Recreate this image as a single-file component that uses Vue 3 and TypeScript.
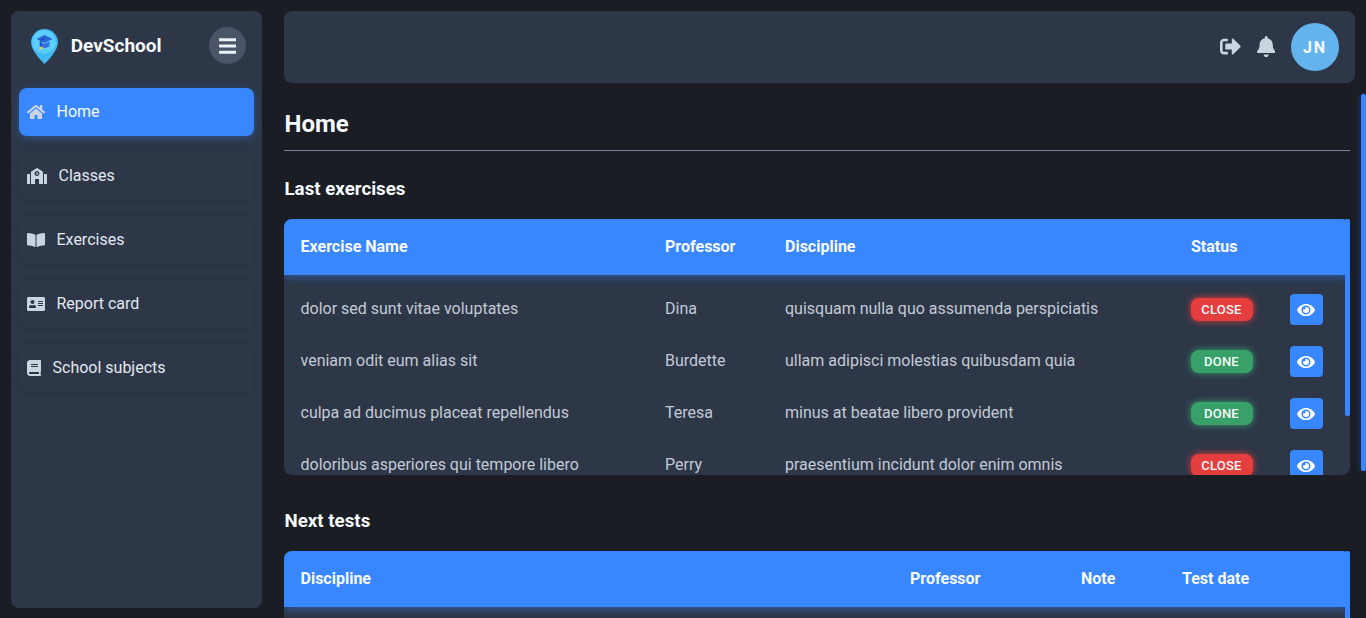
<template>
  <div class="layout">
    <aside class="sidebar">
      <div class="sidebar__head">
        <div class="brand">
          <svg class="brand__logo" viewBox="0 0 27 35" aria-hidden="true">
            <path d="M13.500 0C6 0 0 6 0 13.500c0 7.300 9.300 17.700 13.500 21.500C17.700 31.200 27 20.800 27 13.500 27 6 21 0 13.500 0z" fill="#43b9f4" />
            <circle cx="13" cy="13" r="11.800" fill="#5ccdfd" />
            <path d="M8.500 12.500v4.300c1.300 1.500 3 2.200 5 2.200s3.700-.7 5-2.200v-4.300l-5 2.500z" fill="#2f6ee3" />
            <path d="M13.500 6 5.500 10l8 4 8-4z" fill="#2b62d9" />
            <path d="M13.300 9.300 9.500 10.800v7h.9v-6.500l3.200-1.300z" fill="#163e9c" />
            <rect x="9" y="17.800" width="2.600" height="2.200" fill="#f6c945" />
          </svg>
          <span class="brand__name">DevSchool</span>
        </div>
        <button class="menu-btn" type="button" aria-label="Menu">
          <svg viewBox="0 0 448 512"><path :d="icons.bars" /></svg>
        </button>
      </div>

      <nav class="nav">
        <a
          v-for="item in navItems"
          :key="item.label"
          class="nav__item"
          :class="{ 'nav__item--active': item.active }"
          href="#"
        >
          <svg class="nav__icon" :viewBox="item.box" aria-hidden="true"><path :d="item.icon" /></svg>
          <span class="nav__label">{{ item.label }}</span>
        </a>
      </nav>
    </aside>

    <div class="content">
      <header class="topbar">
        <svg class="topbar__exit" viewBox="0 0 512 512" aria-hidden="true"><path :d="icons.signOut" /></svg>
        <svg class="topbar__bell" viewBox="0 0 448 512" aria-hidden="true"><path :d="icons.bell" /></svg>
        <div class="avatar">JN</div>
      </header>

      <main class="main">
        <h1 class="main__title">Home</h1>

        <section class="block">
          <h2 class="block__title">Last exercises</h2>
          <div class="table-wrap">
            <div class="table">
              <div class="table__head table__row table__row--exercises">
                <span>Exercise Name</span>
                <span>Professor</span>
                <span>Discipline</span>
                <span>Status</span>
                <span></span>
              </div>
              <div class="table__body">
                <div
                  v-for="row in exercises"
                  :key="row.name"
                  class="table__row table__row--exercises"
                >
                  <span>{{ row.name }}</span>
                  <span>{{ row.professor }}</span>
                  <span>{{ row.discipline }}</span>
                  <span><em class="badge" :class="`badge--${row.status}`">{{ row.status }}</em></span>
                  <span>
                    <button class="eye-btn" type="button" aria-label="View">
                      <svg viewBox="0 0 576 512"><path :d="icons.eye" /></svg>
                    </button>
                  </span>
                </div>
              </div>
            </div>
            <div class="table-wrap__thumb"></div>
          </div>
        </section>

        <section class="block">
          <h2 class="block__title">Next tests</h2>
          <div class="table-wrap">
            <div class="table">
              <div class="table__head table__row table__row--tests">
                <span>Discipline</span>
                <span>Professor</span>
                <span>Note</span>
                <span>Test date</span>
              </div>
            </div>
            <div class="table-wrap__thumb"></div>
          </div>
        </section>
      </main>

      <div class="page-thumb"></div>
    </div>
  </div>
</template>

<script setup lang="ts">
interface NavItem {
  label: string
  box: string
  icon: string
  active?: boolean
}

interface Exercise {
  name: string
  professor: string
  discipline: string
  status: 'close' | 'done'
}

const icons = {
  bars: 'M16 132h416c8.837 0 16-7.163 16-16V76c0-8.837-7.163-16-16-16H16C7.163 60 0 67.163 0 76v40c0 8.837 7.163 16 16 16zm0 160h416c8.837 0 16-7.163 16-16v-40c0-8.837-7.163-16-16-16H16c-8.837 0-16 7.163-16 16v40c0 8.837 7.163 16 16 16zm0 160h416c8.837 0 16-7.163 16-16v-40c0-8.837-7.163-16-16-16H16c-8.837 0-16 7.163-16 16v40c0 8.837 7.163 16 16 16z',
  signOut: 'M497 273L329 441c-15 15-41 4.500-41-17v-96H152c-13.300 0-24-10.700-24-24v-96c0-13.300 10.700-24 24-24h136V88c0-21.400 25.900-32 41-17l168 168c9.300 9.400 9.300 24.600 0 34zM192 436v-40c0-6.600-5.400-12-12-12H96c-17.700 0-32-14.300-32-32V160c0-17.700 14.300-32 32-32h84c6.600 0 12-5.400 12-12V76c0-6.600-5.400-12-12-12H96c-53 0-96 43-96 96v192c0 53 43 96 96 96h84c6.600 0 12-5.400 12-12z',
  bell: 'M224 512c35.320 0 63.970-28.650 63.970-64H160.030c0 35.350 28.650 64 63.970 64zm215.390-149.710c-19.320-20.760-55.470-51.990-55.470-154.290 0-77.700-54.480-139.900-127.940-155.160V32c0-17.670-14.320-32-31.980-32s-31.980 14.330-31.980 32v20.840C118.560 68.100 64.080 130.300 64.080 208c0 102.300-36.150 133.530-55.470 154.290-6 6.450-8.660 14.160-8.610 21.710.11 16.400 12.980 32 32.100 32h383.800c19.120 0 32-15.600 32.100-32 .05-7.550-2.610-15.270-8.610-21.710z',
  eye: 'M572.520 241.400C518.290 135.590 410.930 64 288 64S57.680 135.640 3.480 241.410a32.350 32.350 0 0 0 0 29.190C57.710 376.410 165.070 448 288 448s230.320-71.640 284.520-177.410a32.350 32.350 0 0 0 0-29.190zM288 400a144 144 0 1 1 144-144 143.930 143.930 0 0 1-144 144zm0-240a95.310 95.310 0 0 0-25.310 3.790 47.850 47.850 0 0 1-66.900 66.900A95.780 95.780 0 1 0 288 160z',
}

const navItems: NavItem[] = [
  {
    label: 'Home',
    active: true,
    box: '0 0 576 512',
    icon: 'M280.370 148.260L96 300.110V464a16 16 0 0 0 16 16l112.060-.29a16 16 0 0 0 15.920-16V368a16 16 0 0 1 16-16h64a16 16 0 0 1 16 16v95.640a16 16 0 0 0 16 16.050L464 480a16 16 0 0 0 16-16V300L295.670 148.260a12.190 12.190 0 0 0-15.300 0zM571.600 251.470L488 182.560V44.050a12 12 0 0 0-12-12h-56a12 12 0 0 0-12 12v72.610L318.470 43a48 48 0 0 0-61 0L4.340 251.470a12 12 0 0 0-1.600 16.900l25.500 31A12 12 0 0 0 45.150 301l235.220-193.740a12.190 12.190 0 0 1 15.300 0L530.900 301a12 12 0 0 0 16.900-1.600l25.500-31a12 12 0 0 0-1.700-16.930z',
  },
  {
    label: 'Classes',
    box: '0 0 640 512',
    icon: 'M0 224v272c0 8.840 7.160 16 16 16h80V192H32c-17.670 0-32 14.330-32 32zm360-48h-24v-40c0-4.420-3.580-8-8-8h-16c-4.420 0-8 3.580-8 8v64c0 4.420 3.580 8 8 8h48c4.420 0 8-3.580 8-8v-16c0-4.420-3.580-8-8-8zm137.750-63.960l-160-106.670a32 32 0 0 0-35.500 0l-160 106.670A32 32 0 0 0 128 138.660V512h128V368c0-8.840 7.160-16 16-16h96c8.840 0 16 7.160 16 16v144h128V138.670c0-10.700-5.350-20.700-14.250-26.630zM320 256c-44.180 0-80-35.820-80-80s35.820-80 80-80 80 35.820 80 80-35.820 80-80 80zm288-64h-64v320h80c8.840 0 16-7.160 16-16V224c0-17.670-14.330-32-32-32z',
  },
  {
    label: 'Exercises',
    box: '0 0 576 512',
    icon: 'M542.220 32.050c-54.800 3.110-163.720 14.430-230.960 55.590-4.640 2.840-7.270 7.890-7.270 13.170v363.870c0 11.550 12.630 18.850 23.280 13.490 69.180-34.820 169.230-44.320 218.700-46.920 16.890-.89 30.020-14.430 30.020-30.660V62.750c.01-17.710-15.350-31.740-33.770-30.700zM264.730 87.640C197.500 46.480 88.580 35.170 33.780 32.050 15.360 31.010 0 45.040 0 62.750V400.600c0 16.240 13.130 29.780 30.020 30.660 49.490 2.600 149.590 12.110 218.770 46.950 10.620 5.350 23.210-1.940 23.210-13.460V100.630c0-5.290-2.620-10.140-7.270-12.990z',
  },
  {
    label: 'Report card',
    box: '0 0 576 512',
    icon: 'M528 32H48C21.500 32 0 53.500 0 80v352c0 26.500 21.500 48 48 48h480c26.500 0 48-21.500 48-48V80c0-26.500-21.500-48-48-48zm-352 96c35.300 0 64 28.700 64 64s-28.700 64-64 64-64-28.700-64-64 28.700-64 64-64zm112 236.800c0 10.600-10 19.200-22.400 19.200H86.400C74 384 64 375.400 64 364.800v-19.200c0-31.800 30.100-57.600 67.200-57.600h5c12.300 5.100 25.700 8 39.800 8s27.600-2.900 39.800-8h5c37.100 0 67.200 25.800 67.200 57.600v19.200zM512 312c0 4.400-3.600 8-8 8H360c-4.400 0-8-3.600-8-8v-16c0-4.400 3.600-8 8-8h144c4.400 0 8 3.600 8 8v16zm0-64c0 4.400-3.600 8-8 8H360c-4.400 0-8-3.600-8-8v-16c0-4.400 3.600-8 8-8h144c4.400 0 8 3.600 8 8v16zm0-64c0 4.400-3.600 8-8 8H360c-4.400 0-8-3.600-8-8v-16c0-4.400 3.600-8 8-8h144c4.400 0 8 3.600 8 8v16z',
  },
  {
    label: 'School subjects',
    box: '0 0 448 512',
    icon: 'M448 360V24c0-13.300-10.700-24-24-24H96C43 0 0 43 0 96v320c0 53 43 96 96 96h328c13.300 0 24-10.700 24-24v-16c0-7.500-3.500-14.300-8.900-18.700-4.200-15.400-4.200-59.300 0-74.700 5.400-4.300 8.900-11.100 8.900-18.600zM128 134c0-3.300 2.700-6 6-6h212c3.300 0 6 2.700 6 6v20c0 3.300-2.700 6-6 6H134c-3.300 0-6-2.700-6-6v-20zm0 64c0-3.300 2.700-6 6-6h212c3.300 0 6 2.700 6 6v20c0 3.300-2.700 6-6 6H134c-3.300 0-6-2.700-6-6v-20zm253.400 250H96c-17.700 0-32-14.300-32-32 0-17.600 14.400-32 32-32h285.400c-1.900 17.100-1.900 46.900 0 64z',
  },
]

const exercises: Exercise[] = [
  { name: 'dolor sed sunt vitae voluptates', professor: 'Dina', discipline: 'quisquam nulla quo assumenda perspiciatis', status: 'close' },
  { name: 'veniam odit eum alias sit', professor: 'Burdette', discipline: 'ullam adipisci molestias quibusdam quia', status: 'done' },
  { name: 'culpa ad ducimus placeat repellendus', professor: 'Teresa', discipline: 'minus at beatae libero provident', status: 'done' },
  { name: 'doloribus asperiores qui tempore libero', professor: 'Perry', discipline: 'praesentium incidunt dolor enim omnis', status: 'close' },
]
</script>

<style>
html,
body {
  margin: 0;
  background: #1a1d24;
}
</style>

<style scoped>
.layout {
  display: flex;
  gap: 22px;
  height: 100vh;
  padding: 11px 11px 10px;
  box-sizing: border-box;
  overflow: hidden;
  font-family: Roboto, sans-serif;
  font-size: 16px;
  color: #e2e8f0;
}

.sidebar {
  flex: 0 0 251px;
  padding: 16px 8px;
  box-sizing: border-box;
  background: #2d3748;
  border-radius: 8px;
}

.sidebar__head {
  display: flex;
  align-items: center;
  justify-content: space-between;
  height: 37px;
  padding: 0 8px 0 12px;
  margin-bottom: 24px;
}

.brand {
  display: flex;
  align-items: center;
  gap: 12.75px;
}

.brand__logo {
  width: 27px;
  height: 35px;
  margin-top: 1px;
}

.brand__name {
  font-size: 19px;
  font-weight: 700;
  color: #f7fafc;
}

.menu-btn {
  display: flex;
  align-items: center;
  justify-content: center;
  width: 37px;
  height: 37px;
  padding: 0;
  border: 0;
  border-radius: 50%;
  background: #4a5568;
  cursor: pointer;
}

.menu-btn svg {
  width: 17.5px;
  height: 20px;
  fill: #edf2f7;
}

.nav {
  display: flex;
  flex-direction: column;
  gap: 16px;
}

.nav__item {
  display: flex;
  align-items: center;
  gap: 11.5px;
  height: 48px;
  padding-left: 8px;
  border-radius: 8px;
  background: #2d3748;
  box-shadow: 0 0 6px rgba(26, 32, 44, 0.25);
  color: #e2e8f0;
  text-decoration: none;
}

.nav__item--active {
  background: #3887ff;
  box-shadow: 0 2px 8px rgba(56, 135, 255, 0.35);
  color: #f7fafc;
}

.nav__icon {
  height: 16px;
  fill: #cbd5e0;
}

.nav__label {
  margin-bottom: 2px;
}

.content {
  position: relative;
  flex: 1;
  display: flex;
  flex-direction: column;
  min-width: 0;
  gap: 11px;
}

.topbar {
  flex: 0 0 72px;
  display: flex;
  align-items: center;
  justify-content: flex-end;
  padding-right: 16px;
  background: #2d3748;
  border-radius: 8px;
}

.topbar__exit {
  width: 21px;
  height: 21px;
  margin-bottom: 1px;
  fill: #cbd5e0;
}

.topbar__bell {
  width: 18.4px;
  height: 21px;
  margin: 0 0 1px 15.6px;
  fill: #cbd5e0;
}

.avatar {
  display: flex;
  align-items: center;
  justify-content: center;
  width: 48px;
  height: 48px;
  margin-left: 16px;
  border-radius: 50%;
  background: #63b3ed;
  color: #f7fafc;
  font-weight: 700;
  letter-spacing: 2px;
}

.main {
  flex: 1;
  min-height: 0;
  margin: 0 -11px -10px 0;
  padding: 12px 16px 15px 0;
  overflow: hidden;
}

.page-thumb {
  position: absolute;
  top: 83px;
  right: -11px;
  width: 5px;
  height: 377px;
  border-radius: 2px;
  background: #3887ff;
  box-shadow: -1px 0 6px rgba(56, 135, 255, 0.25);
}

.main__title {
  height: 36px;
  margin: 0;
  padding: 0 0 8px 0.5px;
  border-bottom: 1px solid #718096;
  font-size: 24px;
  font-weight: 700;
  line-height: 36px;
  color: #f7fafc;
}

.block {
  margin-top: 32px;
}

.main__title + .block {
  margin-top: 24px;
}

.block__title {
  height: 28px;
  margin: 0 0 16px;
  padding-left: 0.5px;
  font-size: 18.72px;
  font-weight: 700;
  line-height: 28px;
  color: #f7fafc;
}

.table-wrap {
  position: relative;
}

.table-wrap__thumb {
  position: absolute;
  top: 0;
  right: 0;
  width: 5px;
  height: 197px;
  border-radius: 2px;
  background: #3887ff;
}

.table {
  height: 256px;
  overflow: hidden;
  background: #2d3748;
  border-radius: 8px;
}

.table__row {
  display: grid;
  align-items: center;
  height: 52px;
  color: #c3cad5;
}

.table__row > span {
  padding-left: 16.5px;
}

.table__row--exercises {
  grid-template-columns: 364.5px 120px 406px 99px 71px;
}

.table__row--tests {
  grid-template-columns: 609.5px 171px 101px 179px;
}

.table__head {
  position: relative;
  z-index: 1;
  height: 56px;
  background: #3887ff;
  box-shadow: 0 2px 8px rgba(56, 135, 255, 0.45);
  color: #f7fafc;
  font-weight: 700;
}

.table__head > span {
  margin-bottom: 2px;
}

.table__body {
  padding-top: 7px;
}

.badge {
  display: inline-flex;
  align-items: center;
  justify-content: center;
  width: 62px;
  height: 23px;
  margin: 3px 0 0 -0.5px;
  border-radius: 8px;
  color: #f7fafc;
  font-size: 13px;
  font-style: normal;
  font-weight: 500;
  letter-spacing: 0.2px;
  text-transform: uppercase;
}

.badge--close {
  background: #e53e3e;
  box-shadow: 0 0 7px #e53e3e;
}

.badge--done {
  background: #38a169;
  box-shadow: 0 0 7px #38a169;
}

.eye-btn {
  display: flex;
  align-items: center;
  justify-content: center;
  width: 33px;
  height: 31px;
  margin: 3px 0 0 -0.5px;
  padding: 0;
  border: 0;
  border-radius: 4px;
  background: #3887ff;
  cursor: pointer;
}

.eye-btn svg {
  width: 18px;
  height: 16px;
  fill: #fff;
}
</style>
